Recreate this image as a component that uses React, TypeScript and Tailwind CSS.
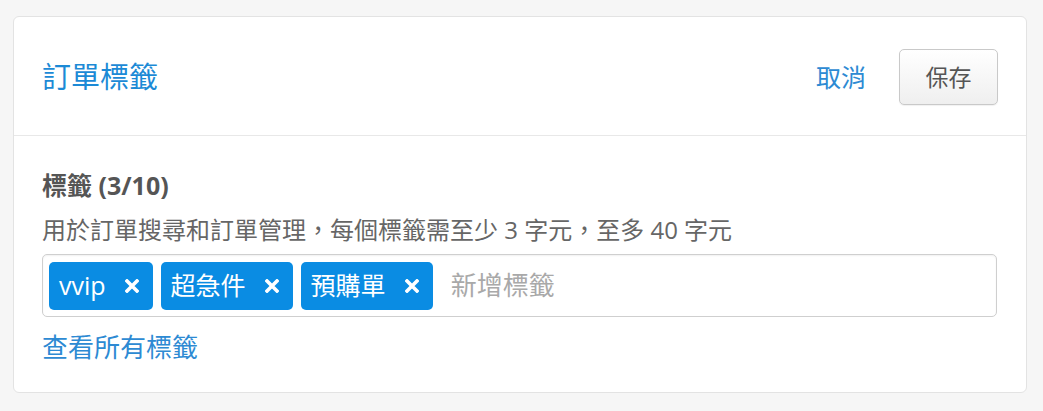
import { useState } from "react"

function CloseIcon() {
  return (
    <svg width="14" height="14" viewBox="0 0 14 14" className="shrink-0">
      <path d="M2 2 L12 12 M12 2 L2 12" stroke="white" strokeWidth="3.6" strokeLinecap="square" />
    </svg>
  )
}

export default function App() {
  const [tags, setTags] = useState(["vvip", "超急件", "預購單"])

  return (
    <div className="min-h-screen bg-[#f6f6f6] pt-[16px] pl-[13px] font-['Open_Sans','Noto_Sans_CJK_TC',sans-serif]">
      <div className="w-[1014px] h-[377px] bg-white border border-[#e3e3e3] rounded-[6px]">
        {/* Header */}
        <div className="h-[119px] flex items-center justify-between pl-[28px] pr-[28px] border-b border-[#e8e8e8]">
          <h1 className="text-[29px] leading-none text-[#1c8ad6]">訂單標籤</h1>
          <div className="flex items-center gap-[33px] pt-[2px]">
            <button className="text-[25px] leading-none text-[#2d8ad3]">取消</button>
            <button className="w-[99px] h-[56px] rounded-[5px] border border-[#c9c9c9] bg-gradient-to-b from-white to-[#efefef] shadow-[0_1px_1px_rgba(0,0,0,0.06)] text-[23px] text-[#555]">
              保存
            </button>
          </div>
        </div>

        {/* Body */}
        <div className="pl-[28px] pr-[29px] pt-[34px]">
          <div className="text-[25px] leading-[30px] font-bold text-[#555]">標籤 (3/10)</div>
          <p className="mt-[15px] text-[24px] leading-[30px] text-[#666]">
            用於訂單搜尋和訂單管理，每個標籤需至少 3 字元，至多 40 字元
          </p>
          <div className="mt-[9px] h-[63px] flex items-center gap-[8px] px-[6px] border border-[#cfcfcf] rounded-[5px] shadow-[inset_0_1px_2px_rgba(0,0,0,0.06)]">
            {tags.map((tag) => (
              <span
                key={tag}
                className="h-[48px] flex items-center gap-[19px] pl-[10px] pr-[14px] rounded-[5px] bg-[#0a8ce3] text-white text-[25px]"
              >
                <span>{tag}</span>
                <button onClick={() => setTags(tags.filter((t) => t !== tag))}>
                  <CloseIcon />
                </button>
              </span>
            ))}
            <input
              placeholder="新增標籤"
              className="ml-[10px] flex-1 outline-none text-[26px] text-[#555] placeholder:text-[#a9a9a9]"
            />
          </div>
          <a className="block mt-[15px] text-[26px] leading-[30px] text-[#2d8ad3]">查看所有標籤</a>
        </div>
      </div>
    </div>
  )
}
